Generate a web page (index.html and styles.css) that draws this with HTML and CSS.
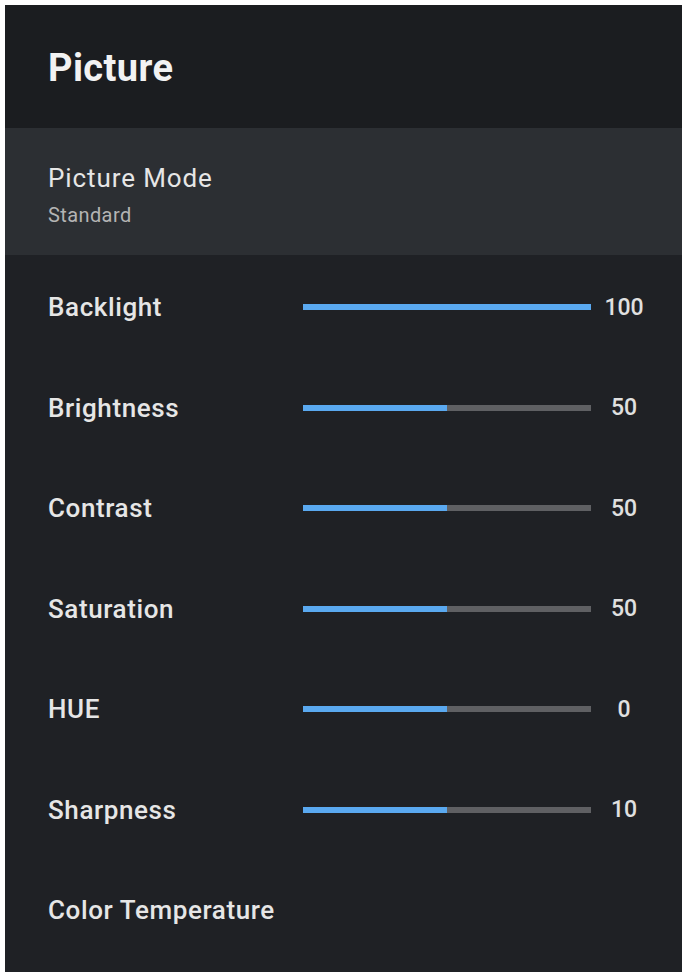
FILE: index.html
```html
<!DOCTYPE html>
<html>
<head>
<meta charset="utf-8">
<link rel="stylesheet" href="styles.css">
</head>
<body>
<div class="panel">
  <div class="header"><h1 class="title">Picture</h1></div>
  <div class="mode">
    <div class="mode-title">Picture Mode</div>
    <div class="mode-sub">Standard</div>
  </div>
  <div class="list">
    <div class="row"><span class="label">Backlight</span><div class="track"><div class="fill" style="width:100%"></div></div><span class="value">100</span></div>
    <div class="row"><span class="label">Brightness</span><div class="track"><div class="fill" style="width:50%"></div></div><span class="value">50</span></div>
    <div class="row"><span class="label">Contrast</span><div class="track"><div class="fill" style="width:50%"></div></div><span class="value">50</span></div>
    <div class="row"><span class="label">Saturation</span><div class="track"><div class="fill" style="width:50%"></div></div><span class="value">50</span></div>
    <div class="row"><span class="label">HUE</span><div class="track"><div class="fill" style="width:50%"></div></div><span class="value">0</span></div>
    <div class="row"><span class="label">Sharpness</span><div class="track"><div class="fill" style="width:50%"></div></div><span class="value">10</span></div>
    <div class="row"><span class="label">Color Temperature</span></div>
  </div>
</div>
</body>
</html>
```
FILE: styles.css
```css
* { box-sizing: border-box; }
html, body { margin: 0; padding: 0; background: #ffffff; }
body { padding: 5px 5px 4px 5px; font-family: Roboto, "Liberation Sans", sans-serif; }
.panel {
  width: 677px;
  height: 967px;
  background: #1f2125;
  display: flex;
  flex-direction: column;
  overflow: hidden;
}
.header {
  height: 123px;
  background: #1b1d20;
  padding-left: 43px;
  display: flex;
  align-items: center;
}
.title {
  margin: 0;
  color: #f2f2f2;
  font-size: 38px;
  line-height: 44px;
  font-weight: 700;
  letter-spacing: 0.4px;
  padding-top: 3px;
}
.mode {
  height: 127px;
  background: #2c2f33;
  padding-left: 43px;
  padding-top: 6px;
  display: flex;
  flex-direction: column;
  justify-content: center;
  gap: 10px;
}
.mode-title { color: #e6e6e6; font-size: 26px; line-height: 30px; letter-spacing: 0.9px; }
.mode-sub { color: #b4b4b4; font-size: 20px; line-height: 24px; letter-spacing: 0.4px; }
.list { display: flex; flex-direction: column; padding-top: 2px; }
.row {
  height: 100.5px;
  display: flex;
  align-items: center;
  padding-left: 43px;
}
.label {
  width: 255px;
  color: #e6e6e6;
  font-size: 26px;
  font-weight: 500;
  letter-spacing: 0.6px;
  white-space: nowrap;
}
.track {
  width: 288px;
  height: 6px;
  background: #5f6063;
  display: flex;
}
.fill { height: 100%; background: #5aa9f0; }
.value {
  width: 66px;
  text-align: center;
  color: #e0e0e0;
  font-size: 23px;
  font-weight: 500;
}
```
